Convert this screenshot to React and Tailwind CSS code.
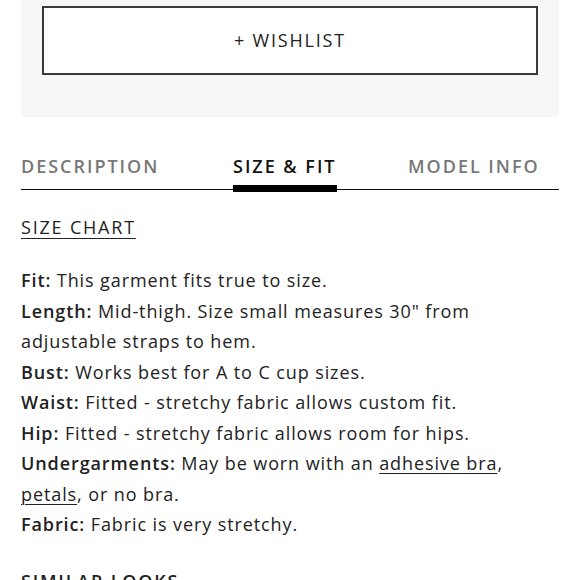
import React from 'react';

const details = [
    { label: 'Fit:', text: 'This garment fits true to size.' },
    { label: 'Length:', text: 'Mid-thigh. Size small measures 30" from adjustable straps to hem.' },
    { label: 'Bust:', text: 'Works best for A to C cup sizes.' },
    { label: 'Waist:', text: 'Fitted - stretchy fabric allows custom fit.' },
    { label: 'Hip:', text: 'Fitted - stretchy fabric allows room for hips.' },
];

const App = () => {
    return (
        <div className="w-[580px] h-[580px] overflow-hidden bg-white text-[#222] font-['Open_Sans',sans-serif]">
            <div className="mx-[21px] h-[117px] bg-[#f7f7f7] px-[21px] pt-[6px]">
                <button className="w-full h-[69px] bg-white border-2 border-[#3a3a3a] flex items-center justify-center text-[18px] tracking-[0.1em] text-[#222]">
                    + WISHLIST
                </button>
            </div>

            <div className="mx-[21px] mt-[36px] flex border-b border-[#111] h-[37px] text-[18px] font-semibold tracking-[0.11em]">
                <div className="text-[#777] w-[212px]">DESCRIPTION</div>
                <div className="relative w-[175px] text-[#111]">
                    <span>SIZE &amp; FIT</span>
                    <div className="absolute left-0 w-[104px] top-[32px] h-[7px] bg-black"></div>
                </div>
                <div className="text-[#777]">MODEL INFO</div>
            </div>

            <div className="mx-[21px] mt-[24px] text-[18px] tracking-[0.1em]">
                <a className="underline underline-offset-[4px] decoration-1">SIZE CHART</a>
            </div>

            <div className="mx-[21px] mt-[24px] w-[515px] text-[18px] leading-[30.5px] tracking-[0.9px]">
                {details.map((d) => (
                    <div key={d.label}>
                        <span className="font-semibold">{d.label}</span> {d.text}
                    </div>
                ))}
                <div>
                    <span className="font-semibold">Undergarments:</span> May be worn with an{' '}
                    <a className="underline underline-offset-[3px] decoration-1">adhesive bra</a>,{' '}
                    <a className="underline underline-offset-[3px] decoration-1">petals</a>, or no bra.
                </div>
                <div>
                    <span className="font-semibold">Fabric:</span> Fabric is very stretchy.
                </div>
            </div>

            <div className="mx-[21px] mt-[28px] text-[18px] font-semibold tracking-[0.1em]">SIMILAR LOOKS</div>
        </div>
    );
};

export default App;
